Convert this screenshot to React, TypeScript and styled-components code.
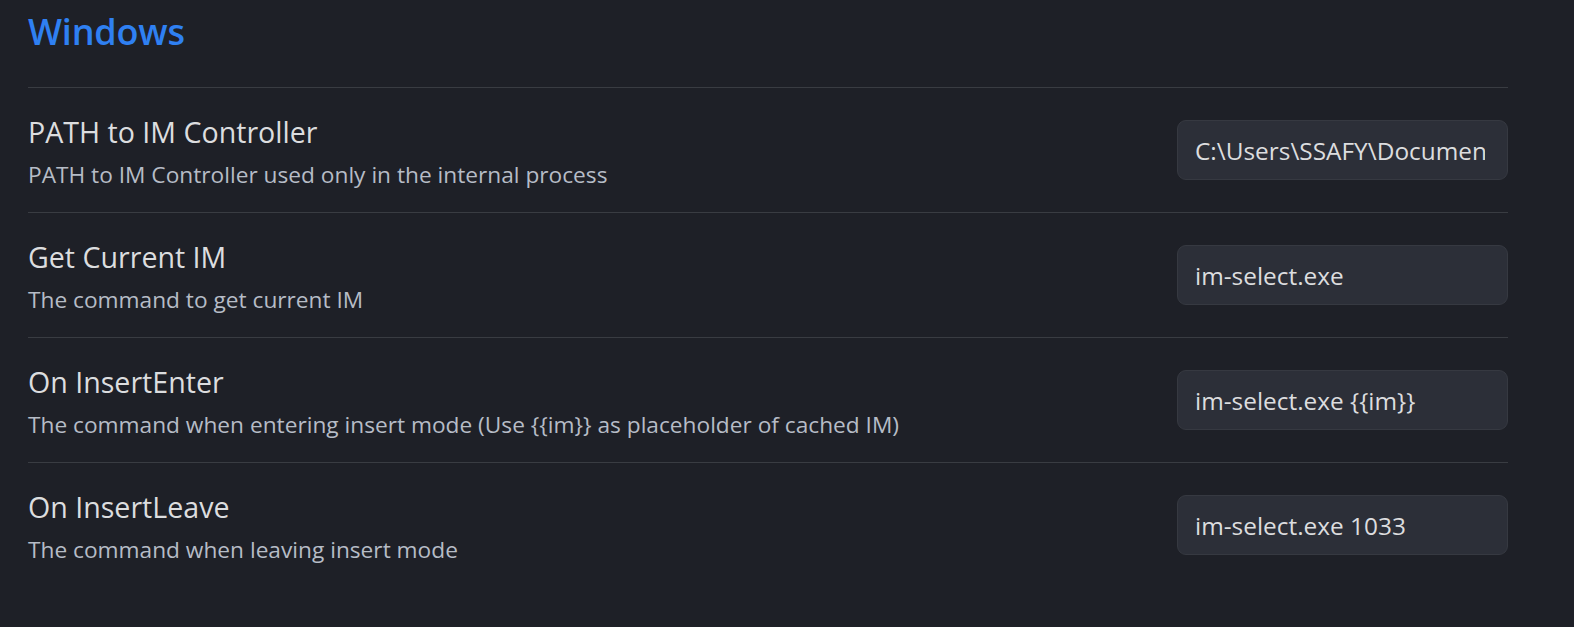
import React from "react";
import styled, { createGlobalStyle } from "styled-components";

const Global = createGlobalStyle`
  html, body { margin: 0; padding: 0; background: #1e2027; }
  body { font-family: "Open Sans", "Noto Sans", sans-serif; }
  * { box-sizing: border-box; }
`;

const Page = styled.div`
  width: 1574px;
  height: 627px;
  background: #1e2027;
  padding: 0 66px 0 28px;
  overflow: hidden;
`;

const Heading = styled.h3`
  margin: 0;
  height: 87px;
  padding-top: 8px;
  font-size: 36px;
  font-weight: 600;
  line-height: 48px;
  color: #2f80f2;
  letter-spacing: -0.2px;
`;

const Row = styled.div`
  display: flex;
  align-items: center;
  justify-content: space-between;
  gap: 24px;
  height: 125px;
  border-top: 1px solid #393c42;
`;

const Info = styled.div`
  display: flex;
  flex-direction: column;
  gap: 9px;
  padding-top: 4px;
`;

const Name = styled.div`
  font-size: 28.6px;
  line-height: 36px;
  color: #dcdddf;
`;

const Desc = styled.div`
  font-size: 22.7px;
  line-height: 32px;
  color: #b6bcc6;
`;

const Input = styled.input`
  width: 331px;
  height: 60px;
  flex: none;
  padding: 0 22px 0 17px;
  border-radius: 9px;
  border: 1.5px solid #363941;
  background: #2c2f38;
  color: #dcdddf;
  font-family: "Open Sans", "Noto Sans", sans-serif;
  font-size: 24.4px;
  outline: none;
`;

const settings = [
  {
    name: "PATH to IM Controller",
    desc: "PATH to IM Controller used only in the internal process",
    value: "C:\\Users\\SSAFY\\Documents\\im-select.exe",
  },
  { name: "Get Current IM", desc: "The command to get current IM", value: "im-select.exe" },
  {
    name: "On InsertEnter",
    desc: "The command when entering insert mode (Use {{im}} as placeholder of cached IM)",
    value: "im-select.exe {{im}}",
  },
  { name: "On InsertLeave", desc: "The command when leaving insert mode", value: "im-select.exe 1033" },
];

export default function App() {
  return (
    <Page>
      <Global />
      <Heading>Windows</Heading>
      {settings.map((s) => (
        <Row key={s.name}>
          <Info>
            <Name>{s.name}</Name>
            <Desc>{s.desc}</Desc>
          </Info>
          <Input defaultValue={s.value} spellCheck={false} />
        </Row>
      ))}
    </Page>
  );
}
